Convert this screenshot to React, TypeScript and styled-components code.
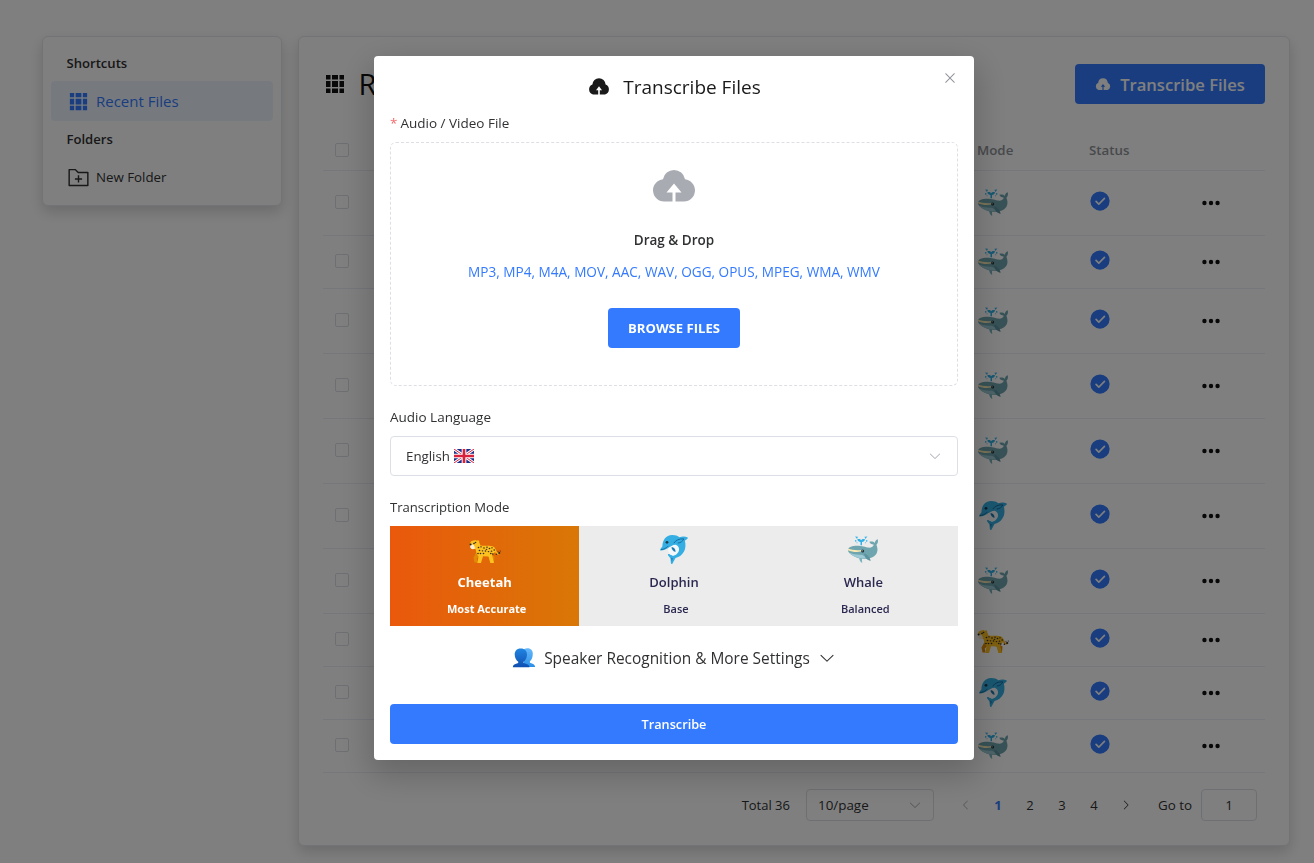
import React from "react";
import styled, { createGlobalStyle } from "styled-components";

const PRIMARY = "#337aff";
const LINE = "#ebeef5";

const GlobalStyle = createGlobalStyle`
  * { box-sizing: border-box; }
  body {
    margin: 0;
    background: #fff;
    color: #303133;
    font-family: "Open Sans", "Noto Sans", sans-serif;
    font-size: 13px;
    overflow: hidden;
  }
  svg { display: block; flex: none; }
`;

/* ---------- icons ---------- */

const PATHS = {
  grid: "M640 384v256H384V384zm64 0h192v256H704zm-64 512H384V704h256zm64 0V704h192v192zm-64-768v192H384V128zm64 0h192v192H704zM320 384v256H128V384zm0 512H128V704h192zm0-768v192H128V128z",
  folderAdd:
    "M128 192v640h768V320H485.76L357.504 192zm-32-64h287.872l128.384 128H928a32 32 0 0 1 32 32v576a32 32 0 0 1-32 32H96a32 32 0 0 1-32-32V160a32 32 0 0 1 32-32m384 416V416h64v128h128v64H544v128h-64V608H352v-64z",
  upload:
    "M544 864V672h128L512 480 352 672h128v192H320v-1.6c-5.376.32-10.496 1.6-16 1.6A240 240 0 0 1 64 624c0-123.136 93.12-223.488 212.608-237.248A239.808 239.808 0 0 1 512 192a239.872 239.872 0 0 1 235.456 194.752c119.488 13.76 212.48 114.112 212.48 237.248a240 240 0 0 1-240 240c-5.376 0-10.56-1.28-16-1.6v1.6z",
  check:
    "M512 64a448 448 0 1 1 0 896 448 448 0 0 1 0-896zm-55.808 536.384-99.52-99.584a38.4 38.4 0 1 0-54.336 54.336l126.72 126.72a38.272 38.272 0 0 0 54.336 0l262.4-262.464a38.4 38.4 0 1 0-54.272-54.336z",
  more: "M176 400a112 112 0 1 1 0 224 112 112 0 0 1 0-224m336 0a112 112 0 1 1 0 224 112 112 0 0 1 0-224m336 0a112 112 0 1 1 0 224 112 112 0 0 1 0-224",
  down: "M831.872 340.864 512 652.672 192.128 340.864a30.592 30.592 0 0 0-42.752 0 29.12 29.12 0 0 0 0 41.6L489.664 714.24a32 32 0 0 0 44.672 0l340.288-331.712a29.12 29.12 0 0 0 0-41.728 30.592 30.592 0 0 0-42.752 0z",
  left: "M609.408 149.376 277.76 489.6a32 32 0 0 0 0 44.672l331.648 340.352a29.12 29.12 0 0 0 41.728 0 30.592 30.592 0 0 0 0-42.752L339.264 511.936l311.872-319.872a30.592 30.592 0 0 0 0-42.688 29.12 29.12 0 0 0-41.728 0z",
  right:
    "M340.864 149.312a30.592 30.592 0 0 0 0 42.752L652.736 512 340.864 831.872a30.592 30.592 0 0 0 0 42.752 29.12 29.12 0 0 0 41.728 0L714.24 534.336a32 32 0 0 0 0-44.672L382.592 149.376a29.12 29.12 0 0 0-41.728 0z",
  close:
    "M764.288 214.592 512 466.88 259.712 214.592a31.936 31.936 0 0 0-45.12 45.12L466.752 512 214.528 764.224a31.936 31.936 0 1 0 45.12 45.184L512 557.184l252.288 252.288a31.936 31.936 0 0 0 45.12-45.12L557.12 512.064l252.288-252.352a31.936 31.936 0 1 0-45.12-45.184z",
};

const Icon = ({ name, size, color = "currentColor" }: { name: keyof typeof PATHS; size: number; color?: string }) => (
  <svg width={size} height={size} viewBox="0 0 1024 1024" fill={color}>
    <path d={PATHS[name]} />
  </svg>
);

const SmallCloud = ({ width }: { width: number }) => (
  <svg width={width} height={width * 0.77} viewBox="0 0 22 17" fill="currentColor">
    <path d="M10.200 16.500V12.200H8L11 8.400l3 3.800H11.800V16.500H17a5.200 5.200 0 0 0 .6-9.900A6.700 6.700 0 0 0 11 .2a6.700 6.700 0 0 0-6.600 6.400A5.200 5.200 0 0 0 5 16.500z" />
  </svg>
);

const Whale = () => (
  <svg width="32" height="32" viewBox="0 0 32 32">
    <path d="M13.500 12.300V9c-1.500 0-2.900-1-3.200-2.700 1.600-.6 3.200-.2 3.900.9.700-1.100 2.200-1.500 3.800-.9-.3 1.700-1.500 2.700-3 2.700v3.300z" fill="#2fb1e6" />
    <g fill="#3bb6ea">
      <path d="M8 3.400l3 .3-1 2.200zM20.400 3.400l-3 .3 1 2.200z" />
      <circle cx="8.700" cy="7.900" r=".8" />
      <circle cx="19.700" cy="7.900" r=".8" />
      <circle cx="10" cy="9.700" r=".5" />
      <circle cx="18.400" cy="9.700" r=".5" />
    </g>
    <path d="M1 16.200c.8-2.300 4.800-3.700 10.600-3.400 5.400.3 8.200 2 11.200 1.900 2.400-.1 3.900-1.500 3.800-3.100-2.300-.2-3.600-1.100-4.200-2.800 2.200-.5 4.300 0 5.300 1.200.4-2 1.500-3.200 3.100-3.800.5 2.400-.1 4.300-1.400 5.600 1.600 4.100 1.900 8.400-2.300 11.400-4.800 3.300-13 3.300-17.900 1.100C4.800 22.400.400 19.600 1 16.200z" fill="#6fa5ae" />
    <path d="M2.200 19.600c3.600 2 8.400 2.300 12.600 2.100 2 1 4 1.800 4.200 3.400-3.600.6-7 .4-9.800-.8-3.300-1.400-5.900-2.700-7-4.700z" fill="#9cc9d3" />
    <path d="M1.100 15.600c3.600 1.600 8.800 2 13.200 1.500l-.2 1.500c-4.600.8-9.800.2-13.200-1.400z" fill="#f8e9b5" />
    <path d="M17 20.600c2.600.4 5.600 3 6.700 7.100-2.700.3-6-2.500-6.700-7.100z" fill="#5b939e" />
    <path d="M12.200 25h2.700l.3 4.900c-1.600-.6-2.800-2.400-3-4.900z" fill="#79b4bf" />
    <circle cx="15.700" cy="18" r="1.500" fill="#24343a" />
    <circle cx="15.300" cy="17.700" r=".5" fill="#ccc" />
  </svg>
);

const Dolphin = () => (
  <svg width="32" height="32" viewBox="0 0 32 32">
    <path d="M2.200 17.200C2 16 3.200 14.800 4.400 13.400 4.600 7 8 2.300 14 2.100c3.200-.1 5.400.8 7.400 2.200 2.600-.9 5.600-1.100 8.300.2.600 1.100-1 2-2.800 3.200 2.100 8.500-1.600 15.100-9.400 17.400l-3.100 5.700c-.6.5-1.300.2-1.500-.6l-.4-4.700-2.500-3.300c-.4-1 .5-1.400 1.300-1.200l3.700 1.800c3.100-2.600 4.100-6 3.300-9.500-2.600-.6-4.700.2-7.100 1.300-2.600 1.300-5.300 2.900-8.500 3-.3 0-.5-.1-.5-.4z" fill="#35afe3" />
    <path d="M10.300 15c2-1.300 4.300-3.300 7.500-3.200 4 1.400 4.600 6.600.2 9.900l-2.600 1-2.800-1c-1.800-1-2.800-3.700-2.300-6.700z" fill="#f4f8fb" />
    <path d="M13.600 14c2.300.2 4.200 2 3.900 4.900-2.500-.6-4-2.500-3.900-4.900z" fill="#1a79b0" />
    <path d="M15.800 10.200c1.800-2.800 5.200-4.700 10-4.300-1.200 2.500-3.300 4-6 4.100" fill="#35afe3" stroke="#176b9d" strokeWidth="1" />
    <path d="M2.900 16.600c2.700-.2 5.700-1.400 7.400-3.700" fill="none" stroke="#176b9d" strokeWidth=".9" />
    <circle cx="9" cy="9.300" r="1.400" fill="#203b4a" />
    <path d="M12.800 24.800l1 3.600 1.200-3.200z" fill="#1f86bf" />
  </svg>
);

const SPOTS = [
  [9.5, 14.5], [12, 13.8], [15, 15], [18, 14.2], [20.5, 15.5], [23, 14.8], [25.2, 17], [10.5, 17.5],
  [13.5, 17.8], [16.5, 18], [19.5, 18.6], [22.5, 18.2], [14.5, 20.5], [23.8, 21], [9, 20.5], [11.5, 20.5],
  [6.5, 9.5], [17.5, 16.3], [21.8, 20.5],
];

const Cheetah = () => (
  <svg width="32" height="32" viewBox="0 0 32 32">
    <path d="M7.500 19l-3 5.500 1 5h3l-.7-4 4-4zM20 20l5.500 3.500-.5 6h-3l-.5-4-4-4z" fill="#e08a08" />
    <path d="M25 15.500c2.300 2.500 2 6.500 5.300 4.800" fill="none" stroke="#f9b51b" strokeWidth="1.700" />
    <path d="M1.200 10.200c.2-1.700 1.600-2.700 3.500-2.700L6.500 7l1.200.8C9 6.500 10.600 7.400 10.200 9.300l1.300 3.200c4.300 1 9.500-.7 13.500 1.600 1.500 1 1.500 3.200 1 5l-3 3 2 8h-3.700l-1.800-6.700-5.500-.2-2 6.800H8.300l1.200-6.500c-2-2-2.300-5-3-7.500-2.800.5-5-1.300-5.300-5.800z" fill="#fcc021" />
    <path d="M1 11.500l3.700.2 1.500 3.500c-2 1.800-4.300 1.300-5-.9z" fill="#fff0d0" />
    <circle cx="1.600" cy="11.500" r="1" fill="#222" />
    <circle cx="5" cy="10.500" r=".8" fill="#222" />
    <g fill="#3b2c1b">
      {SPOTS.map(([x, y]) => (
        <ellipse key={`${x}-${y}`} cx={x} cy={y} rx=".85" ry=".65" />
      ))}
      <circle cx="30.200" cy="20" r="1.100" />
      <circle cx="27.400" cy="21.300" r=".8" />
      <circle cx="31.300" cy="18" r=".6" />
      <circle cx="29" cy="18.200" r=".5" />
    </g>
  </svg>
);

const ANIMALS = { whale: Whale, dolphin: Dolphin, cheetah: Cheetah };
type Animal = keyof typeof ANIMALS;

const People = () => (
  <svg width="24" height="20" viewBox="0 0 24 20">
    <defs>
      <linearGradient id="back" x1="0" y1="0" x2="0" y2="1">
        <stop offset="0" stopColor="#66b8fb" />
        <stop offset="1" stopColor="#2b8fe8" />
      </linearGradient>
      <linearGradient id="front" x1="0" y1="0" x2="0" y2="1">
        <stop offset="0" stopColor="#2185e2" />
        <stop offset="1" stopColor="#0f4fb0" />
      </linearGradient>
    </defs>
    <path d="M12 1.200C15-.6 20.800.2 20.800 5.500c0 3.700-1.100 6.200-2.900 7.700v1.500c3 .9 5.200 1.800 5.200 4.300H12z" fill="url(#back)" />
    <path d="M8.700.4c4.300 0 6.300 2.700 6.300 6.100 0 3.300-1.400 5.800-3.400 7.200v1.400c3.500.8 5.700 1.600 5.900 4.200H.8C.9 16.700 3 15.900 6.200 15.100v-1.400C4.200 12.300 2.700 9.800 2.700 6.500 2.700 3.100 4.500.4 8.700.4z" fill="url(#front)" />
  </svg>
);

const UnionJack = () => (
  <svg width="20" height="14" viewBox="0 0 60 42">
    <path d="M0 0h60v42H0z" fill="#1d2f88" />
    <path d="M0 0l60 42M60 0L0 42" stroke="#fff" strokeWidth="9" />
    <path d="M0 0l60 42M60 0L0 42" stroke="#d8213b" strokeWidth="3" />
    <path d="M30 0v42M0 21h60" stroke="#fff" strokeWidth="14" />
    <path d="M30 0v42M0 21h60" stroke="#d8213b" strokeWidth="8" />
  </svg>
);

/* ---------- page ---------- */

const Page = styled.div`
  display: flex;
  align-items: flex-start;
  gap: 16px;
  height: 863px;
  padding: 36px 24px 0 42px;
`;

const Card = styled.section`
  border: 1px solid #e4e7ed;
  border-radius: 6px;
  background: #fff;
  box-shadow: 0 6px 14px rgba(0, 0, 0, 0.16);
`;

const Sidebar = styled(Card)`
  width: 240px;
  padding: 8px;
`;

const SideHeading = styled.h3`
  display: flex;
  align-items: center;
  height: 36px;
  margin: 0;
  padding-left: 15.5px;
  font-size: 13.1px;
  font-weight: 600;
`;

const SideItem = styled.div<{ $active?: boolean }>`
  display: flex;
  align-items: center;
  gap: 6.5px;
  height: 40px;
  padding-left: 15.5px;
  border-radius: 4px;
  font-size: ${(p) => (p.$active ? 15 : 13.3)}px;
  color: ${(p) => (p.$active ? PRIMARY : "#303133")};
  background: ${(p) => (p.$active ? "#ecf5ff" : "transparent")};
`;

const Main = styled(Card)`
  flex: 1;
  height: 810px;
  padding: 27px 24px 0;
`;

const MainHeader = styled.header`
  display: flex;
  align-items: center;
  justify-content: space-between;
  height: 40px;
`;

const Heading = styled.h1`
  display: flex;
  align-items: center;
  gap: 11.5px;
  margin: 0;
  font-size: 29px;
  font-weight: 500;
  line-height: 38px;
  color: #111;
`;

const Button = styled.button<{ $width: string; $size: number; $gap?: number; $weight?: number }>`
  display: flex;
  align-items: center;
  justify-content: center;
  gap: ${(p) => p.$gap ?? 0}px;
  width: ${(p) => p.$width};
  height: 40px;
  padding: 0;
  border: 0;
  border-radius: 4px;
  background: ${PRIMARY};
  color: #fff;
  font: ${(p) => p.$weight ?? 600} ${(p) => p.$size}px "Open Sans", sans-serif;
`;

const Table = styled.div`
  margin-top: 26px;
`;

const TableRow = styled.div<{ $height: number }>`
  display: grid;
  grid-template-columns: 642px 112px 112px 76px;
  align-items: center;
  height: ${(p) => p.$height}px;
  border-bottom: 1px solid ${LINE};
`;

const Cell = styled.div<{ $lift?: number }>`
  padding: 0 12px ${(p) => (p.$lift ?? 0) * 2}px;
`;

const HeadCell = styled(Cell)`
  font-size: 13.3px;
  font-weight: 600;
  color: #909399;
`;

const Checkbox = styled.span`
  display: block;
  width: 14px;
  height: 14px;
  border: 1px solid #dcdfe6;
  border-radius: 2px;
`;

const Pagination = styled.nav`
  display: flex;
  align-items: center;
  justify-content: flex-end;
  gap: 16px;
  margin-top: 16px;
  padding-right: 8px;
  height: 32px;
`;

const PageSize = styled.div`
  display: flex;
  align-items: center;
  justify-content: space-between;
  width: 128px;
  height: 32px;
  padding: 0 11px 0 11px;
  border: 1px solid #dcdfe6;
  border-radius: 4px;
  font-size: 13.4px;
`;

const Pager = styled.div`
  display: grid;
  grid-template-columns: repeat(6, 32px);
  align-items: center;
  justify-items: center;
`;

const PageNumber = styled.span<{ $active?: boolean }>`
  font-weight: ${(p) => (p.$active ? 700 : 400)};
  color: ${(p) => (p.$active ? PRIMARY : "#303133")};
`;

const Jumper = styled.div`
  display: flex;
  align-items: center;
  justify-content: space-between;
  width: 99px;
  font-size: 13.4px;
`;

const JumpInput = styled.div`
  display: flex;
  align-items: center;
  justify-content: center;
  width: 56px;
  height: 32px;
  border: 1px solid #dcdfe6;
  border-radius: 4px;
`;

/* ---------- dialog ---------- */

const Overlay = styled.div`
  position: fixed;
  inset: 0;
  display: flex;
  justify-content: center;
  align-items: flex-start;
  padding: 56px 0 0 34px;
  background: rgba(0, 0, 0, 0.5);
`;

const Dialog = styled.div`
  position: relative;
  width: 600px;
  height: 704px;
  padding: 8px 16px 16px;
  border-radius: 4px;
  background: #fff;
  box-shadow: 0 12px 32px 4px rgba(0, 0, 0, 0.2);
`;

const CloseButton = styled.span`
  position: absolute;
  top: 14px;
  right: 16px;
`;

const DialogTitle = styled.h2`
  display: flex;
  align-items: center;
  justify-content: center;
  gap: 13px;
  height: 46px;
  margin: 0;
  padding: 0 0 1px 1px;
  font-size: 19px;
  font-weight: 500;
  color: #1a1a1a;
`;

const FieldLabel = styled.label<{ $top?: number; $size?: number }>`
  display: flex;
  align-items: center;
  gap: 3px;
  height: 26px;
  margin: ${(p) => p.$top ?? 0}px 0 6px;
  font-size: ${(p) => p.$size ?? 13.5}px;
`;

const Required = styled.span`
  color: #f56c6c;
`;

const DropZone = styled.div`
  display: flex;
  flex-direction: column;
  align-items: center;
  height: 244px;
  padding-top: 18px;
  border: 1px dashed #dcdfe6;
  border-radius: 6px;
`;

const DropTitle = styled.div`
  margin-top: 21px;
  line-height: 20px;
  font-size: 13.5px;
  font-weight: 600;
`;

const Formats = styled.div`
  margin: 12px 0 26px;
  line-height: 20px;
  font-size: 13.6px;
  color: ${PRIMARY};
`;

const Select = styled.div`
  display: flex;
  align-items: center;
  gap: 4px;
  height: 40px;
  padding: 0 15px;
  border: 1px solid #dcdfe6;
  border-radius: 4px;
  font-size: 13.3px;
`;

const Caret = styled.span`
  margin-left: auto;
`;

const ModeGroup = styled.div`
  display: grid;
  grid-template-columns: repeat(3, 1fr);
  height: 100px;
  background: #ececec;
`;

const ModeOption = styled.div<{ $active?: boolean }>`
  display: flex;
  flex-direction: column;
  align-items: center;
  padding-top: 7px;
  color: ${(p) => (p.$active ? "#fff" : "#2b2850")};
  font-weight: ${(p) => (p.$active ? 700 : 600)};
  background: ${(p) => (p.$active ? "linear-gradient(90deg, #ea580c, #d97706)" : "transparent")};
`;

const ModeName = styled.span`
  margin-top: 7px;
  line-height: 20px;
`;

const ModeNote = styled.span`
  margin-top: 8px;
  padding-left: 4px;
  line-height: 18px;
  font-size: 11px;
`;

const MoreSettings = styled.div`
  display: flex;
  align-items: center;
  justify-content: center;
  gap: 8.5px;
  height: 64px;
  margin-bottom: 14px;
  font-size: 15.45px;
`;

/* ---------- data ---------- */

const ROWS: { height: number; mode: Animal }[] = [
  { height: 65, mode: "whale" },
  { height: 53, mode: "whale" },
  { height: 65, mode: "whale" },
  { height: 65, mode: "whale" },
  { height: 65, mode: "whale" },
  { height: 65, mode: "dolphin" },
  { height: 65, mode: "whale" },
  { height: 53, mode: "cheetah" },
  { height: 53, mode: "dolphin" },
  { height: 53, mode: "whale" },
];

const MODES: { icon: Animal; name: string; note: string }[] = [
  { icon: "cheetah", name: "Cheetah", note: "Most Accurate" },
  { icon: "dolphin", name: "Dolphin", note: "Base" },
  { icon: "whale", name: "Whale", note: "Balanced" },
];

export default function App() {
  return (
    <>
      <GlobalStyle />
      <Page>
        <Sidebar>
          <SideHeading>Shortcuts</SideHeading>
          <SideItem $active>
            <Icon name="grid" size={23} />
            Recent Files
          </SideItem>
          <SideHeading>Folders</SideHeading>
          <SideItem>
            <Icon name="folderAdd" size={23} />
            New Folder
          </SideItem>
        </Sidebar>

        <Main>
          <MainHeader>
            <Heading>
              <Icon name="grid" size={24} />
              Recent Files
            </Heading>
            <Button $width="190px" $size={16.6} $gap={9}>
              <SmallCloud width={16} />
              Transcribe Files
            </Button>
          </MainHeader>

          <Table>
            <TableRow $height={41}>
              <Cell>
                <Checkbox />
              </Cell>
              <HeadCell>Mode</HeadCell>
              <HeadCell>Status</HeadCell>
            </TableRow>
            {ROWS.map((row, i) => {
              const Animal = ANIMALS[row.mode];
              return (
                <TableRow key={i} $height={row.height}>
                  <Cell $lift={1}>
                    <Checkbox />
                  </Cell>
                  <Cell $lift={1}>
                    <Animal />
                  </Cell>
                  <Cell $lift={2}>
                    <Icon name="check" size={22} color={PRIMARY} />
                  </Cell>
                  <Cell>
                    <Icon name="more" size={20} color="#111" />
                  </Cell>
                </TableRow>
              );
            })}
          </Table>

          <Pagination>
            <span>Total 36</span>
            <PageSize>
              10/page
              <Icon name="down" size={14} color="#a8abb2" />
            </PageSize>
            <Pager>
              <Icon name="left" size={12} color="#a8abb2" />
              <PageNumber $active>1</PageNumber>
              <PageNumber>2</PageNumber>
              <PageNumber>3</PageNumber>
              <PageNumber>4</PageNumber>
              <Icon name="right" size={12} />
            </Pager>
            <Jumper>
              Go to
              <JumpInput>1</JumpInput>
            </Jumper>
          </Pagination>
        </Main>
      </Page>

      <Overlay>
        <Dialog>
          <CloseButton>
            <Icon name="close" size={16} color="#909399" />
          </CloseButton>
          <DialogTitle>
            <SmallCloud width={22} />
            Transcribe Files
          </DialogTitle>

          <FieldLabel>
            <Required>*</Required>
            Audio / Video File
          </FieldLabel>
          <DropZone>
            <Icon name="upload" size={48} color="#a8abb2" />
            <DropTitle>Drag &amp; Drop</DropTitle>
            <Formats>MP3, MP4, M4A, MOV, AAC, WAV, OGG, OPUS, MPEG, WMA, WMV</Formats>
            <Button $width="132px" $size={13.1} $weight={700}>
              BROWSE FILES
            </Button>
          </DropZone>

          <FieldLabel $top={18}>Audio Language</FieldLabel>
          <Select>
            English
            <UnionJack />
            <Caret>
              <Icon name="down" size={14} color="#a8abb2" />
            </Caret>
          </Select>

          <FieldLabel $top={18} $size={13.1}>
            Transcription Mode
          </FieldLabel>
          <ModeGroup>
            {MODES.map(({ icon, name, note }, i) => {
              const Animal = ANIMALS[icon];
              return (
                <ModeOption key={name} $active={i === 0}>
                  <Animal />
                  <ModeName>{name}</ModeName>
                  <ModeNote>{note}</ModeNote>
                </ModeOption>
              );
            })}
          </ModeGroup>

          <MoreSettings>
            <People />
            Speaker Recognition &amp; More Settings
            <Icon name="down" size={18} />
          </MoreSettings>
          <Button $width="100%" $size={12.7}>
            Transcribe
          </Button>
        </Dialog>
      </Overlay>
    </>
  );
}
